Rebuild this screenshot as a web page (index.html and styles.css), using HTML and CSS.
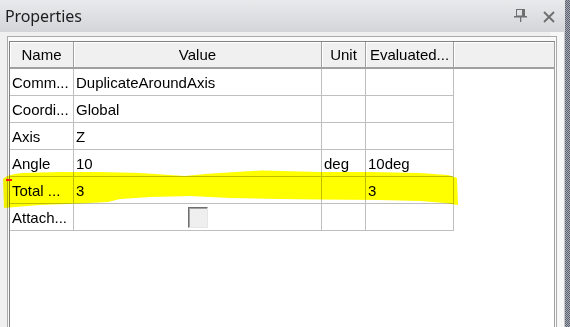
FILE: index.html
```html
<!DOCTYPE html>
<html>
<head>
<meta charset="utf-8">
<link rel="stylesheet" href="styles.css">
</head>
<body>
<div class="window">
  <div class="main">
    <div class="titlebar">
      <span class="title">Properties</span>
      <div class="tools">
        <svg class="pin" width="14" height="13" viewBox="0 0 14 13">
          <rect x="2.5" y="0.5" width="8" height="6.5" fill="none" stroke="#6f6f6f" stroke-width="1"/>
          <rect x="8" y="0.5" width="2.5" height="6.5" fill="#6f6f6f"/>
          <rect x="0" y="7" width="13" height="1.5" fill="#6f6f6f"/>
          <rect x="6" y="8" width="1.3" height="5" fill="#6f6f6f"/>
        </svg>
        <svg class="close" width="12" height="12" viewBox="0 0 12 12">
          <path d="M1 1 L11 11 M11 1 L1 11" stroke="#6e6e6e" stroke-width="1.8" fill="none"/>
        </svg>
      </div>
    </div>
    <div class="panel">
      <div class="frame">
        <div class="inner">
          <div class="grid">
            <div class="hcell">Name</div>
            <div class="hcell">Value</div>
            <div class="hcell">Unit</div>
            <div class="hcell">Evaluated...</div>
            <div class="hcell hfill"></div>

            <div class="cell">Comm...</div>
            <div class="cell">DuplicateAroundAxis</div>
            <div class="cell"></div>
            <div class="cell"></div>
            <div class="fill"></div>

            <div class="cell">Coordi...</div>
            <div class="cell">Global</div>
            <div class="cell"></div>
            <div class="cell"></div>
            <div class="fill"></div>

            <div class="cell">Axis</div>
            <div class="cell">Z</div>
            <div class="cell"></div>
            <div class="cell"></div>
            <div class="fill"></div>

            <div class="cell">Angle</div>
            <div class="cell">10</div>
            <div class="cell">deg</div>
            <div class="cell">10deg</div>
            <div class="fill"></div>

            <div class="cell">Total ...</div>
            <div class="cell">3</div>
            <div class="cell"></div>
            <div class="cell">3</div>
            <div class="fill"></div>

            <div class="cell">Attach...</div>
            <div class="cell center"><span class="checkbox"></span></div>
            <div class="cell"></div>
            <div class="cell"></div>
            <div class="fill"></div>
          </div>
        </div>
      </div>
    </div>
  </div>
  <div class="edge"></div>
  <svg class="highlight" width="570" height="327" viewBox="0 0 570 327">
    <path d="M3,179 C6,176 12,174 22,173 L60,172 L100,172 L140,173 L170,175 L185,176 L205,174 L235,172 L262,170.5 L320,172 L370,172 L420,173 L448,175 L457,178 L458,205 L445,203 L420,201 L380,200 L320,199.5 L280,199 L230,198 L190,196 L150,197 L120,199 L108,202 L80,203.5 L40,205 L15,207 L4,208 Z" fill="#ffff00"/>
  </svg>
  <span class="marker"></span>
</div>
</body>
</html>
```

FILE: styles.css
```css
* { box-sizing: border-box; }
html, body { margin: 0; padding: 0; }
body {
  width: 570px;
  height: 327px;
  overflow: hidden;
  background: #f0f0f0;
  font-family: "Liberation Sans", Arial, sans-serif;
  font-size: 15px;
  color: #000;
}
.window {
  position: relative;
  display: flex;
  width: 570px;
  height: 327px;
  overflow: hidden;
}
.main {
  flex: 1;
  display: flex;
  flex-direction: column;
}
.titlebar {
  height: 32px;
  display: flex;
  align-items: center;
  padding: 0 10px 0 5px;
  background: linear-gradient(#e9eaec, #d3d5d8);
}
.title {
  font-family: "Noto Sans", "Open Sans", sans-serif;
  font-size: 16px;
  color: #1e1e1e;
  letter-spacing: -0.1px;
}
.tools {
  margin-left: auto;
  display: flex;
  align-items: center;
  gap: 15px;
}
.pin { margin-top: -2px; }
.close { margin-top: 1px; }
.panel {
  flex: 1;
  display: flex;
  flex-direction: column;
  padding: 4px 7px 0 7px;
  background: linear-gradient(to right, #f0f0f0 0, #f0f0f0 550px, #f7f7f7 551px);
  border-right: 1px solid #c9c9c9;
}
.frame {
  flex: 1;
  display: flex;
  flex-direction: column;
  border: 1px solid #ababab;
  border-bottom: none;
  padding: 4px 1px 0 1px;
  background: #fafafa;
}
.inner {
  flex: 1;
  border-top: 1px solid #828282;
  border-left: 1px solid #828282;
  border-right: 1px solid #a0a0a0;
  background: #fff;
}
.grid {
  display: grid;
  grid-template-columns: 64px 248px 44px 88px 1fr;
  grid-auto-rows: 27px;
}
.hcell {
  display: flex;
  align-items: center;
  justify-content: center;
  background: #f0f0f0;
  border-right: 1px solid #a0a0a0;
  border-bottom: 2px solid #a0a0a0;
  box-shadow: inset 1px 1px 0 #ffffff;
  white-space: nowrap;
  overflow: hidden;
}
.hfill { border-right: none; }
.cell {
  display: flex;
  align-items: center;
  padding-left: 2px;
  border-right: 1px solid #bfbfbf;
  border-bottom: 1px solid #bfbfbf;
  white-space: nowrap;
  overflow: hidden;
}
.cell.center { justify-content: center; padding-left: 0; }
.fill { background: #fff; }
.checkbox {
  display: block;
  width: 20px;
  height: 21px;
  border: 1px solid;
  border-color: #6f6f6f #e6e6e6 #e6e6e6 #6f6f6f;
  box-shadow: inset 1px 1px 0 #a3a3a3;
  background: #efefef;
}
.edge {
  width: 5px;
  background: repeating-conic-gradient(#5d6170 0 25%, #a6aab4 0 50%) 0 0 / 2px 2px;
}
.highlight {
  position: absolute;
  left: 0;
  top: 0;
  mix-blend-mode: multiply;
  pointer-events: none;
}
.marker {
  position: absolute;
  left: 6px;
  top: 179px;
  width: 6px;
  height: 2px;
  background: #ff1a1a;
}
```
